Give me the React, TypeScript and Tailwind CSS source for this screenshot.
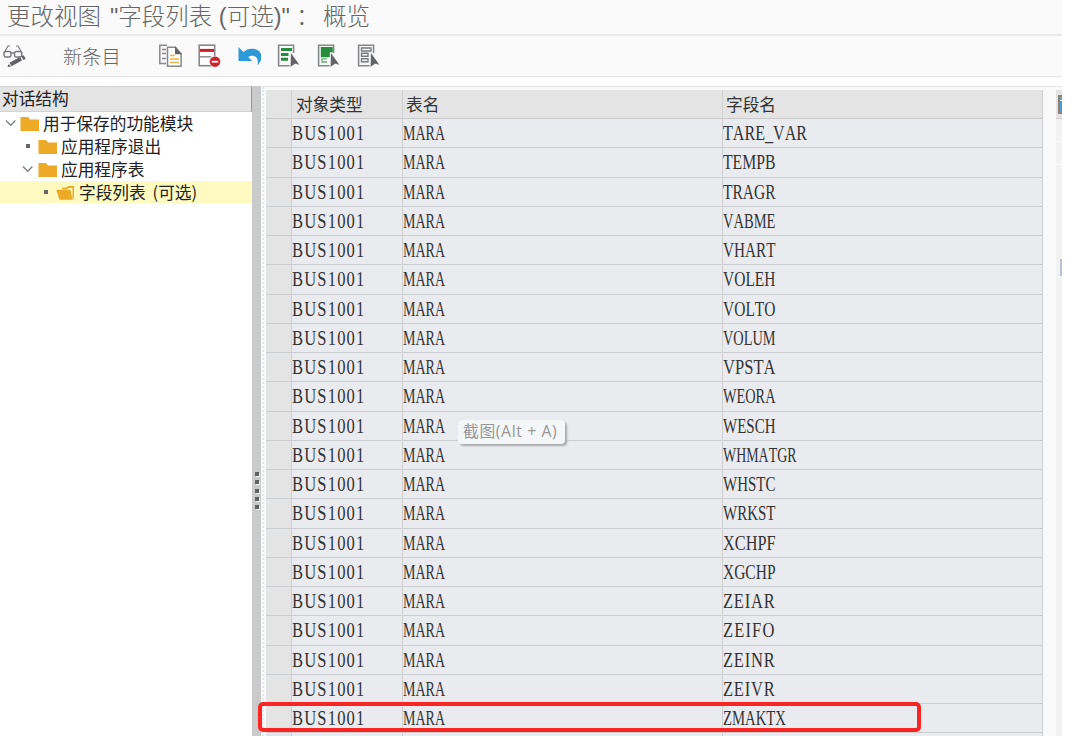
import React from 'react';

const FIELDS = [
  'TARE_VAR', 'TEMPB', 'TRAGR', 'VABME', 'VHART', 'VOLEH', 'VOLTO',
  'VOLUM', 'VPSTA', 'WEORA', 'WESCH', 'WHMATGR', 'WHSTC', 'WRKST',
  'XCHPF', 'XGCHP', 'ZEIAR', 'ZEIFO', 'ZEINR', 'ZEIVR', 'ZMAKTX',
];

// Advance widths of the serif face, in em
const ADVANCE: Record<string, number> = {
  A: 0.722, B: 0.667, C: 0.667, E: 0.611, F: 0.556, G: 0.722, H: 0.722, I: 0.333,
  K: 0.722, L: 0.611, M: 0.889, N: 0.722, O: 0.722, P: 0.556, R: 0.667, S: 0.556,
  T: 0.611, U: 0.722, V: 0.722, W: 0.944, X: 0.722, Z: 0.611, _: 0.5,
};

const FONT_SIZE = 21.5;
const CELL_ADVANCE = 10.5;
const MAX_SCALE = 0.77;

// Condenses a code so that every character takes one grid cell on average
const Code: React.FC<{ text: string }> = ({ text }) => {
  const natural = [...text].reduce((sum, c) => sum + (ADVANCE[c] ?? 0.5), 0) * FONT_SIZE;
  const target = text.length * CELL_ADVANCE;
  const scale = Math.min(target / natural, MAX_SCALE);
  const spacing = (target / scale - natural) / text.length;
  return (
    <span
      className="inline-block origin-left whitespace-nowrap font-['Liberation_Serif',serif] text-[21.5px] leading-[28px] text-[#333] [font-kerning:none]"
      style={{ transform: `scaleX(${scale})`, letterSpacing: spacing }}
    >
      {text}
    </span>
  );
};

const Folder: React.FC<{ open?: boolean }> = ({ open }) => (
  <svg width="19" height="16" viewBox="0 0 19 16" className="shrink-0" fill="#ecaa27">
    {open ? (
      <>
        <path d="M6 4.2V2.5h4.5L12 1h6v12.5l-1.5 1.5V3h-4l-1.3 1.5Z" />
        <path d="M.2 4.8h14.3l2 10H3.4Z" />
      </>
    ) : (
      <path d="M1 1h7l2 2.6h9V15H.5V1Z" />
    )}
  </svg>
);

const Chevron = () => (
  <svg width="12" height="8" viewBox="0 0 12 8" className="mb-0.5 shrink-0" fill="none" stroke="#7e848a" strokeWidth="1.5">
    <path d="m1 1.5 4.7 4.8 4.7-4.8" />
  </svg>
);

const Cursor = () => (
  <path d="m14.6 8 9.4 13.2-5-1.2-4.8 3.5Z" fill="#646466" stroke="#fafafa" strokeWidth=".7" />
);

const DisplayChangeIcon = () => (
  <svg width="24" height="24" viewBox="0 0 24 24" fill="none" stroke="#77777a" strokeWidth="1.4">
    <path d="M1 9 5 2h2M19 9l-4-7h-2" strokeWidth="1.1" />
    <rect x="1" y="7.5" width="7" height="5.5" rx="2" />
    <rect x="11.5" y="7.5" width="7.3" height="5.5" rx="2" />
    <path d="M8 9h3.5" />
    <path d="m7.5 20.5 10.5-5.7" stroke="#626264" strokeWidth="4" />
    <path d="m19.4 14.2 2.3-1.3" stroke="#626264" strokeWidth="4" />
    <path d="m5.5 20-.8 3 3.5-.5Z" fill="#626264" stroke="none" />
  </svg>
);

const CopyIcon = () => (
  <svg width="25" height="24" viewBox="0 0 25 24" className="-mr-0.5" fill="none" stroke="#87888b" strokeWidth="1.5">
    <path d="M9 1.2H1.8v18.2H8M4 5.5h4M4 9.5h4M4 14.5h4" />
    <path d="M9.5 3.2h8l5.6 6.5v12.6H9.5Z" fill="#fff" />
    <path d="M17 2.8v7.5h7Z" fill="#646466" stroke="none" />
    <path d="M12 11.5h5M12 15h9M12 18.5h9" stroke="#eeb34e" />
  </svg>
);

const DeleteIcon = () => (
  <svg width="24" height="24" viewBox="0 0 24 24" fill="none">
    <rect x="2.2" y="1.2" width="15.5" height="20.5" fill="#fff" stroke="#87888b" strokeWidth="1.6" />
    <path d="M3 6.4h14" stroke="#cc202a" strokeWidth="3" />
    <path d="M3 12.8h11" stroke="#87888b" strokeWidth="1.4" />
    <circle cx="18" cy="17.7" r="5.5" fill="#cc202a" stroke="#fafafa" strokeWidth=".6" />
    <path d="M14.8 17.7h6.4" stroke="#fff" strokeWidth="1.8" />
  </svg>
);

const UndoIcon = () => (
  <svg width="24" height="24" viewBox="-1 0 24 24" fill="#2c9ad8">
    <path d="M.5 3v14h13.7l-4.1-4.1c5.4-2.7 10.3-.3 9.7 6.4l-.6 2c7-6 4.8-15-2.6-16.2C12.3 4 8.8 5 5.5 8Z" />
  </svg>
);

const SelectAllIcon = () => (
  <svg width="24" height="24" viewBox="0 0 24 24" fill="none">
    <path d="M17.6 9V1.2h-15v20.5h11" stroke="#87888b" strokeWidth="1.6" />
    <path d="M5 5.5h11M5 10.4h7.5M5 15.3h7" stroke="#278d3c" strokeWidth="3" />
    <Cursor />
  </svg>
);

const SelectBlockIcon = () => (
  <svg width="24" height="24" viewBox="0 0 24 24" fill="none">
    <path d="M17.6 9V1.2h-15v20.5h11" stroke="#87888b" strokeWidth="1.6" />
    <path d="M4.8 3h12v5.5l-3 .2v4.5h-9Z" fill="#278d3c" />
    <path d="M11 14.8H6V18h5" stroke="#65ad72" strokeWidth="1.3" />
    <Cursor />
  </svg>
);

const DeselectIcon = () => (
  <svg width="24" height="24" viewBox="0 0 24 24" fill="none">
    <path d="M17.6 9V1.2h-15v20.5h11" stroke="#87888b" strokeWidth="1.6" />
    <path d="M5.5 4H15v3H5.5ZM5.5 9.3H12v3H5.5ZM5.5 14.8H12v3H5.5Z" stroke="#77787b" strokeWidth="1.4" />
    <Cursor />
  </svg>
);

const Tree = () => (
  <aside className="flex w-[252px] shrink-0 flex-col bg-white text-[16.7px] text-[#222]">
    <div className="flex h-[26px] shrink-0 items-center border-r border-b border-t border-r-[#999] border-b-[#d4d4d4] border-t-[#d0d0d0] bg-[#e4e4e4] pl-0.5">
      对话结构
    </div>
    <div className="flex h-[23px] items-center pl-[5px]">
      <Chevron />
      <div className="ml-[3px] flex items-center gap-1"><Folder />用于保存的功能模块</div>
    </div>
    <div className="flex h-[23px] items-center pl-[26px]">
      <i className="mb-0.5 size-1 bg-[#666]" />
      <div className="ml-2 flex items-center gap-1"><Folder />应用程序退出</div>
    </div>
    <div className="flex h-[23px] items-center pl-[22px]">
      <Chevron />
      <div className="ml-1 flex items-center gap-1"><Folder />应用程序表</div>
    </div>
    <div className="flex h-[22px] items-center bg-[#fffbc0] pt-px pl-11">
      <i className="mb-0.5 size-1 bg-[#666]" />
      <div className="ml-2 flex items-center gap-1 [word-spacing:3px]"><Folder open />字段列表 (可选)</div>
    </div>
  </aside>
);

const Splitter = () => (
  <div className="flex w-[9px] shrink-0 flex-col items-center gap-[4.3px] bg-[#cacaca] pt-[386px]">
    {[1, 2, 3, 4, 5].map((i) => (
      <i key={i} className="size-1 shrink-0 bg-[#626262] shadow-[1px_1px_0_#eee]" />
    ))}
  </div>
);

const Table = () => (
  <div className="w-[777px] shrink-0">
    <div className="grid h-[29px] grid-cols-[26px_111px_320px_320px] border-b border-[#c9c9c9] bg-[#e4e4e4] text-[16.7px] leading-[29px] text-[#333]">
      <div className="border-r border-[#d2d2d2]" />
      <div className="border-r border-[#d2d2d2] pl-1">对象类型</div>
      <div className="border-r border-[#d2d2d2] pl-[3px]">表名</div>
      <div className="border-r border-[#cfcfcf] pl-[3px]">字段名</div>
    </div>
    {[...FIELDS, ''].map((field) => (
      <div
        key={field}
        className="grid h-[29.25px] grid-cols-[26px_111px_320px_320px] overflow-hidden border-b border-[#cbcdd0] bg-[#eaebef]"
      >
        <div className="border-r border-[#cfcfcf] bg-[#e4e4e4]" />
        <div className="border-r border-[#cfcfcf]">{field && <Code text="BUS1001" />}</div>
        <div className="border-r border-[#cfcfcf]">{field && <Code text="MARA" />}</div>
        <div className="border-r border-[#cfcfcf]">{field && <Code text={field} />}</div>
      </div>
    ))}
  </div>
);

export default function App() {
  return (
    <div className="relative h-[736px] w-[1080px] overflow-hidden bg-white font-['Noto_Sans_CJK_SC',sans-serif]">
      <div className="flex h-full w-[1062px] flex-col overflow-hidden">
        <header className="flex h-9 shrink-0 items-start border-b-2 border-[#e9e9e9] bg-[#fafafa] pl-[7px] font-['Liberation_Sans','Noto_Sans_CJK_SC',sans-serif] text-[23.5px] leading-[34px] font-light whitespace-pre text-[#666]">
          <span className="w-[103px]">更改视图</span>
          <span className="w-[186px]">"字段列表 (可选)"</span>
          <span className="w-[27px]">：</span>
          <span>概览</span>
        </header>

        <div className="flex h-[41px] shrink-0 items-center border-b border-[#e5e5e5] bg-[#fafafa] pl-[3px]">
          <DisplayChangeIcon />
          <span className="ml-9 w-[95px] text-[19.3px] font-light text-[#666]">新条目</span>
          <div className="flex gap-[15.8px]">
            <CopyIcon />
            <DeleteIcon />
            <UndoIcon />
            <SelectAllIcon />
            <SelectBlockIcon />
            <DeselectIcon />
          </div>
        </div>

        <main className="mt-[9px] flex min-h-0 flex-1">
          <Tree />
          <Splitter />
          <div className="flex flex-1 overflow-hidden">
            <div className="w-px shrink-0 bg-white" />
            <div className="flex flex-1 border-t border-[#e4e4e4] bg-[#f9f9f9]">
              <div className="w-1 shrink-0 border-l-2 border-dotted border-[#dfe9ee]" />
              <div className="pt-[3px]"><Table /></div>
              <div className="mt-[3px] ml-[13px] w-1.5 shrink-0 bg-[#f2f2f2]">
                <div className="flex h-[29px] items-center justify-end overflow-hidden border-b border-[#ccc] bg-[#e3e3e3]">
                  <div className="h-[19px] w-1 border-y-2 border-l-2 border-[#8e8275] bg-[#4b9ad8]">
                    <div className="h-1 border-b border-white bg-[#5ba7df]" />
                  </div>
                </div>
                <div className="h-[23px] border-b border-[#fafafa]" />
                <div className="h-[23px] border-b border-[#fafafa]" />
                <div className="mt-[94px] ml-auto h-[17px] w-0.5 bg-[#b8c3cf]" />
              </div>
            </div>
          </div>
        </main>
      </div>

      <div className="absolute top-[420px] left-[458px] flex h-6 w-[107px] items-center rounded-sm bg-[#f5f6f7] pl-[5px] font-['Open_Sans','Noto_Sans_CJK_SC',sans-serif] text-[15.8px] tracking-[0.6px] whitespace-nowrap text-[#979797] shadow-[2px_2px_2px_#aaa]">
        截图(Alt + A)
      </div>
      <div className="absolute top-[702px] left-[258px] h-[30px] w-[663px] rounded-[5px] border-4 border-[#f92523]" />
    </div>
  );
}
